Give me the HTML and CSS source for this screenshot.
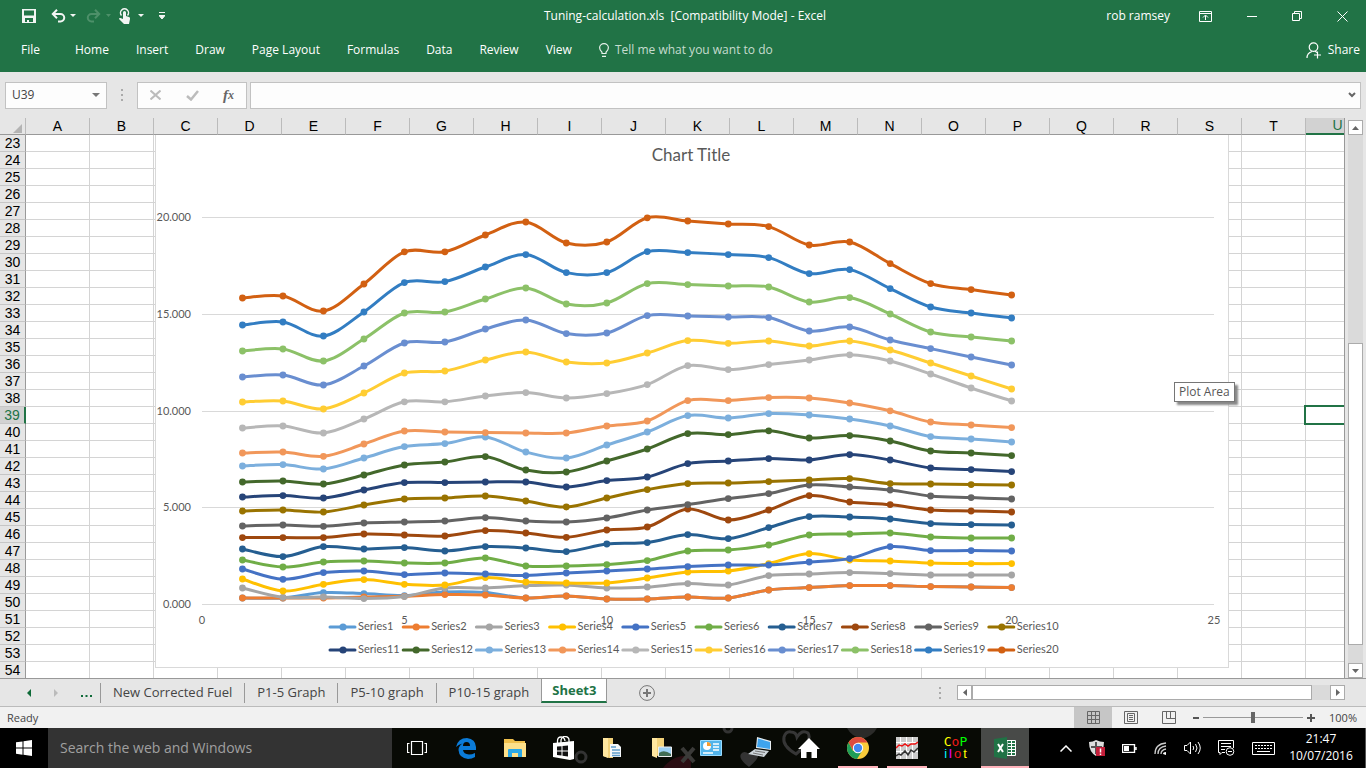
FILE: index.html
```html
<!DOCTYPE html>
<html lang="en">
<head>
<meta charset="utf-8">
<title>Tuning-calculation.xls - Excel</title>
<link rel="stylesheet" href="styles.css">
</head>
<body>
<header class="ribbon">
  <div class="titlebar">
    <div class="quick">
      <button class="ib" aria-label="Save"><svg width="14" height="14"><path d="M0 0h14v14H0zM2 1.500v5h10v-5zM3 9v4h2v-2h2v2h4V9z" fill="#f2f5f3" fill-rule="evenodd"/></svg></button>
      <button class="ib undo" aria-label="Undo"><svg width="25" height="14"><path d="M2 5h7.500a3.500 3.500 0 0 1 0 7.500H7M6 .8 1.800 5 6 9.200" fill="none" stroke="#f2f5f3" stroke-width="2"/><path d="M19 5h6l-3 3z" fill="#f2f5f3"/></svg></button>
      <button class="ib redo" aria-label="Redo"><svg width="25" height="14"><path d="M13 5H5.500a3.500 3.500 0 0 0 0 7.500H8M9 .8 13.200 5 9 9.200" fill="none" stroke="#4d9069" stroke-width="2"/><path d="M20 5h5l-2.500 3z" fill="#4d9069"/></svg></button>
      <button class="ib" aria-label="Touch mode"><svg width="25" height="16"><path d="M2.500 7.500a4 4 0 1 1 6 0" fill="none" stroke="#f2f5f3" stroke-width="1.500"/><path d="M4 4.500a1.500 1.500 0 0 1 3 0V8l3 1q1.500.5 1 2l-1 5H5L0 11q0-1.500 1.500-1L4 11z" fill="#f2f5f3"/><path d="M19 6h6l-3 3z" fill="#f2f5f3"/></svg></button>
      <button class="ib custom" aria-label="Customize toolbar"><svg width="6" height="8"><path d="M0 .5h6M0 3.500h6L3 7z" fill="#f2f5f3" stroke="#f2f5f3"/></svg></button>
    </div>
    <h1 class="doc">Tuning-calculation.xls&nbsp; [Compatibility Mode] - Excel</h1>
    <div class="window">
      <span class="user">rob ramsey</span>
      <button class="ib" aria-label="Ribbon options"><svg width="13" height="11"><path d="M.5.5h12v10H.5zM.5 2.500h12M6.500 9V4.500M4 6.500l2.500-2.500L9 6.500" fill="none" stroke="#fff"/></svg></button>
      <button class="ib" aria-label="Minimize"><svg width="10" height="11"><path d="M0 5.500h10" stroke="#fff"/></svg></button>
      <button class="ib" aria-label="Restore"><svg width="10" height="10"><path d="M.5 2.500h7v7h-7zM2.500 2.500v-2h7v7h-2" fill="none" stroke="#fff"/></svg></button>
      <button class="ib" aria-label="Close"><svg width="11" height="11"><path d="m.5.5 10 10m0-10-10 10" stroke="#fff"/></svg></button>
    </div>
  </div>
  <nav class="menu">
    <button class="file">File</button><button>Home</button><button>Insert</button><button>Draw</button><button>Page Layout</button><button>Formulas</button><button>Data</button><button>Review</button><button>View</button>
    <button class="tell"><svg width="10" height="14"><path d="M3 10.500V9.200Q.6 7 .6 4.800a4.400 4.200 0 0 1 8.800 0Q9.400 7 7 9.200v1.300zM3 13.300h4" fill="none" stroke="#e8f2ec" stroke-width="1.200"/></svg>Tell me what you want to do</button>
    <button class="share"><svg width="16" height="17"><path d="M1 16q0-5 5-6.500M7.500.8a4.200 4.200 0 1 1 0 8.600 4.200 4.200 0 0 1 0-8.600M9 9.300l2 1.200M8 13h7M11.500 9.500v7" fill="none" stroke="#fff" stroke-width="1.200"/></svg>Share</button>
  </nav>
</header>

<div class="formula">
  <div class="namebox"><input aria-label="Name box" value="U39"><button class="ib" aria-label="Names"><svg width="8" height="4"><path d="M0 0h8L4 4z" fill="#777"/></svg></button></div>
  <svg class="grip" width="2" height="12"><path d="M0 0h2v2H0zM0 5h2v2H0zM0 10h2v2H0z" fill="#aaa"/></svg>
  <div class="fxgroup">
    <button class="ib" aria-label="Cancel"><svg width="11" height="10"><path d="m.5.5 10 9m0-9-10 9" stroke="#bcbcbc" stroke-width="2"/></svg></button>
    <button class="ib" aria-label="Enter"><svg width="13" height="11"><path d="m1 6 4 3.500L12 1" fill="none" stroke="#bcbcbc" stroke-width="2.500"/></svg></button>
    <button class="ib fx" aria-label="Insert function">f<sub>x</sub></button>
  </div>
  <div class="entry"><input aria-label="Formula bar"><button class="ib" aria-label="Expand"><svg width="8" height="6"><path d="m1 1 3 3 3-3" fill="none" stroke="#666" stroke-width="2"/></svg></button></div>
</div>

<main class="work">
  <div class="sheet">
    <table class="grid"><thead><tr id="cols"><th class="corner"><svg width="9" height="9"><path d="M9 0v9H0z" fill="#b4b4b4"/></svg></th></tr></thead><tbody id="rows"></tbody></table>
    <div class="clip">
      <div class="chart"><svg id="chart" viewBox="156 135 1072 532" width="1072" height="532" role="img" aria-label="Chart"></svg></div>
      <div class="tip">Plot Area</div>
    </div>
  </div>
  <div class="vscroll">
    <button class="sb" aria-label="Scroll up"><svg width="7" height="4"><path d="M0 4h7L3.500 0z" fill="#666"/></svg></button>
    <div class="track"><div class="thumb"></div></div>
    <button class="sb" aria-label="Scroll down"><svg width="7" height="4"><path d="M0 0h7L3.500 4z" fill="#666"/></svg></button>
  </div>
</main>

<div class="tabs">
  <div class="arrows">
    <button class="ib" aria-label="Previous sheet"><svg width="4" height="8"><path d="M4 0v8L0 4z" fill="#0e6a38"/></svg></button>
    <button class="ib" aria-label="Next sheet"><svg width="4" height="8"><path d="M0 0v8l4-4z" fill="#bbb"/></svg></button>
    <button class="ib" aria-label="More sheets"><svg width="11" height="10"><path d="M0 7h2v2H0zM4.500 7h2v2h-2zM9 7h2v2H9z" fill="#0e6a38"/></svg></button>
  </div>
  <button class="tab">New Corrected Fuel</button><button class="tab">P1-5 Graph</button><button class="tab">P5-10 graph</button><button class="tab">P10-15 graph</button><button class="tab on">Sheet3</button>
  <button class="ib add" aria-label="New sheet"><svg width="16" height="16"><circle cx="8" cy="8" r="7.400" fill="none" stroke="#777"/><path d="M8 4v8M4 8h8" stroke="#777" stroke-width="2"/></svg></button>
  <svg class="grip" width="2" height="12"><path d="M0 0h2v2H0zM0 5h2v2H0zM0 10h2v2H0z" fill="#aaa"/></svg>
  <div class="hscroll">
    <button class="sb" aria-label="Scroll left"><svg width="4" height="7"><path d="M4 0v7L0 3.500z" fill="#666"/></svg></button>
    <div class="track"><div class="thumb"></div></div>
    <button class="sb" aria-label="Scroll right"><svg width="4" height="7"><path d="M0 0v7l4-3.500z" fill="#666"/></svg></button>
  </div>
</div>

<div class="status">
  <span>Ready</span>
  <div class="views">
    <button class="ib view on" aria-label="Normal"><svg width="13" height="13"><path d="M.5.500h12v12H.5zM.5 4.500h12M.5 8.500h12M4.500.5v12M8.500.5v12" fill="none" stroke="#666"/></svg></button>
    <button class="ib view" aria-label="Page layout"><svg width="14" height="13"><path d="M.5.500h13v12H.5zM3.500 2.500h7v8h-7zM5 4.500h4M5 6.500h4M5 8.500h4" fill="none" stroke="#666"/></svg></button>
    <button class="ib view" aria-label="Page break"><svg width="14" height="13"><path d="M.5.500h13v12H.5zM4.500.5v7h9M8.500.5v7" fill="none" stroke="#666"/></svg></button>
  </div>
  <div class="zoom">
    <button class="ib" aria-label="Zoom out"><svg width="6" height="8"><path d="M0 4h6" stroke="#555" stroke-width="2"/></svg></button>
    <input type="range" aria-label="Zoom" min="0" max="200" value="100">
    <button class="ib" aria-label="Zoom in"><svg width="8" height="8"><path d="M0 4h8M4 0v8" stroke="#555" stroke-width="2"/></svg></button>
  </div>
  <span class="pct">100%</span>
</div>

<footer class="taskbar">
  <button class="ib start" aria-label="Start"><svg width="16" height="16"><path d="M0 2.300 6.500 1.400v6.200H0zM7.500 1.200 16 0v7.600H7.500zM0 8.500h6.500v6.200L0 13.800zM7.500 8.500H16V16l-8.500-1.200z" fill="#fff"/></svg></button>
  <input class="search" aria-label="Search" placeholder="Search the web and Windows">
  <nav class="apps">
    <svg class="wall" width="588" height="40">
      <path d="M271 40q10-14 28-12v12z" fill="#2a0d12"/>
      <path d="m290 20 12 14m0-14-12 14" stroke="#3a3a38" stroke-width="4"/>
      <circle cx="189" cy="29" r="5" fill="none" stroke="#333" stroke-width="3"/><circle cx="336" cy="0" r="4" fill="none" stroke="#333" stroke-width="3"/>
      <path d="M357 39q-11-8-8-13 3-4 8 0 5-6 9-2 3 5-9 15" fill="#333"/>
      <path d="M404 26q-14-8-12-17 2-6 7-5 5 0 6 5 5-8 11-4 5 7-12 21z" fill="none" stroke="#363636" stroke-width="3"/>
      <path d="M455 0h30q-4 8-15 11-11-3-15-11z" fill="#2b2b29"/>
    </svg>
    <button class="ib app" aria-label="Task view"><svg width="20" height="14"><path d="M4.500.500h11v13h-11zM2.500 2.500h-2v9h2M17.500 2.500h2v9h-2" fill="none" stroke="#fff" stroke-width="1.200"/></svg></button>
    <button class="ib app" aria-label="Edge"><svg width="20" height="21"><path d="M0 9Q2 0 11 0q8.500 1 9 9v3H7q.5 4 6 4.500 3 0 6-1.500v4q-3 2-7 2-9-1-9.500-9 0-4 4-6.500Q3 6 0 9m7-1h7q0-4-3.500-4T7 8" fill="#0b7bd8" fill-rule="evenodd"/></svg></button>
    <button class="ib app" aria-label="File Explorer"><svg width="22" height="19"><path d="M0 0h9l2 2h10v16H0z" fill="#f0c04c"/><path d="M0 4h22v14H0z" fill="#fde08a"/><path d="M4 18v-7q0-1 1-1h12q1 0 1 1v7h-4v-4H8v4z" fill="#2ba8e6"/></svg></button>
    <button class="ib app" aria-label="Store"><svg width="21" height="24"><path d="M0 7 21 5v18l-4 1-17-3z" fill="#fff"/><path d="M4.500 8V5q0-4 3.500-4t4 4M8 7V4q1-4 4.500-3.500T16 4v3" fill="none" stroke="#fff" stroke-width="1.300"/><path d="m4 10.500 4.500-.3v4.300H4zM9.500 10l5.500-.5v5H9.500zM4 15.500h4.500v4L4 19zM9.500 15.500H15v5l-5.500-.8z" fill="#111"/></svg></button>
    <button class="ib app" aria-label="Documents"><svg width="19" height="20"><path d="M0 0h10v20H6l-6-2z" fill="#f2d27a"/><path d="M0 0h5v20L0 18z" fill="#ffe7a0"/><path d="M7 6h8l3 3v10H7z" fill="#f5f8fb"/><path d="M8 9h5M9 12h8M9 15h8M9 17.500h8" stroke="#5f9dcc" stroke-width="1.300"/></svg></button>
    <button class="ib app" aria-label="Pictures"><svg width="20" height="20"><path d="M0 0h12v18H6l-6-1z" fill="#f2d27a"/><path d="M0 0h5v20l-5-2z" fill="#ffe7a0"/><path d="M6.500 9h13v9.500h-13z" fill="#9ed2f5" stroke="#eee"/><path d="M7 18v-3q5-4 12 1v2z" fill="#416d54"/></svg></button>
    <button class="ib app" aria-label="Control panel"><svg width="22" height="16"><path d="M.5.500h21v15H.5z" fill="#52b4ea" stroke="#9bdcff"/><circle cx="7" cy="6" r="4" fill="#fff"/><path d="M7 6V2a4 4 0 0 1 4 4z" fill="#f59b2d"/><path d="M13 4h6M13 7h6M13 10h6M3 13h10" stroke="#fff" stroke-width="1.600"/></svg></button>
    <button class="ib app" aria-label="Computer"><svg width="24" height="22"><path d="m9 0 14 4v9L8 11z" fill="#e8eef2"/><path d="m10 1.500 12 3.500v7L9 10z" fill="#3fa4ee"/><path d="m7 12 14 2-5 6-16-3z" fill="#cdd5da"/><path d="m7 14 10 1.500M5 16l10 2" stroke="#777"/></svg></button>
    <button class="ib app" aria-label="Home"><svg width="22" height="20"><path d="M11 0 22 11h-3v9h-5.500v-6h-5v6H3v-9H0z" fill="#fff"/></svg></button>
    <button class="ib app run" aria-label="Chrome"><svg width="22" height="22"><circle cx="11" cy="11" r="11" fill="#f9cb3b"/><path d="M1.500 5.500A11 11 0 0 1 20.500 5.500H11L6 13.500z" fill="#dd4b3e"/><path d="M1.500 5.500A11 11 0 0 0 10 22l5-8H6z" fill="#1f9d58"/><circle cx="11" cy="11" r="5.200" fill="#fff"/><circle cx="11" cy="11" r="4.200" fill="#4387f0"/></svg></button>
    <button class="ib app run" aria-label="Charts"><svg width="22" height="22"><path d="M0 0h22v22H0z" fill="#ccc"/><path d="M4.500 0v22M10.500 0v22M16.500 0v22M0 5.500h22M0 14.500h22" stroke="#fff"/><path d="m0 11 3-3 3 1 3-2 3 2 3-2 4 0 3-2" fill="none" stroke="#e11" stroke-width="1.500"/><path d="m0 19 3-2 2 1 4-4 3 4 3-5 3 2 4-4" fill="none" stroke="#333" stroke-width="1.500"/></svg></button>
    <button class="ib app copilot" aria-label="CoPilot"><span><b class="y">C</b><b class="r">o</b><b class="g">P</b></span><span class="pilot"><b class="c">i</b><b class="m">l</b><b class="r">o</b><b class="y">t</b></span></button>
  </nav>
  <button class="ib app excel" aria-label="Excel"><svg width="22" height="22"><path d="M13 3.500h8.500v15H13z" fill="#207245" stroke="#fff"/><path d="M14 6.500h7M14 9.500h7M14 12.500h7M14 15.500h7M17.500 4v14" stroke="#fff"/><path d="m0 2 13-2v22L0 20z" fill="#207245"/><path d="m4 7 5 8m0-8-5 8" stroke="#fff" stroke-width="2"/></svg></button>
  <div class="tray">
    <button class="ib" aria-label="Show hidden icons"><svg width="12" height="7"><path d="m.5 6.500 5.500-5.500 5.500 5.500" fill="none" stroke="#fff" stroke-width="1.500"/></svg></button>
    <button class="ib" aria-label="Security"><svg width="16" height="16"><path d="M0 2q4 0 7-2 4 2 8 2 0 10-8 14Q0 12 0 2z" fill="#ddd"/><path d="M7 2v12M2 7h11" stroke="#555" stroke-width="2"/><path d="M7 7h9v9H7z" fill="#c41e3a"/><path d="M11.500 8.500v4M11.500 13.500V15" stroke="#fff" stroke-width="1.500"/></svg></button>
    <button class="ib" aria-label="Battery"><svg width="15" height="9"><path d="M.5.500h12v8H.5zM14 3v3" fill="none" stroke="#fff" stroke-width="1.400"/><path d="M2 2h5v5H2z" fill="#fff"/></svg></button>
    <button class="ib" aria-label="Network"><svg width="13" height="13"><path d="M1 12Q1 2 12 1M4 12Q4 5 12 4M7 12q0-4 5-5" fill="none" stroke="#ccc" stroke-width="1.300"/><path d="M9 12q0-2 3-2v3z" fill="#fff"/></svg></button>
    <button class="ib" aria-label="Volume"><svg width="17" height="14"><path d="M.5 4.500H3l3.500-3.500v12L3 9.500H.5zM9 5q1.500 2 0 4M11.500 3q3 4 0 8M14 1q4.500 6 0 12" fill="none" stroke="#fff"/></svg></button>
    <button class="ib" aria-label="Notifications"><svg width="17" height="16"><path d="M7 12.500H4l-2 2v-2H.5V.5h15V8M3 3.500h10M3 6.500h10M3 9.500h4" fill="none" stroke="#fff"/><circle cx="12" cy="11.500" r="3.800" fill="#000" stroke="#fff"/><path d="M10 11.500h4" stroke="#fff"/></svg></button>
    <button class="ib" aria-label="Keyboard"><svg width="23" height="13"><path d="M.5.500h22v12H.5z" fill="none" stroke="#fff"/><path d="M3 3.500h18M3 6.500h18" stroke="#fff" stroke-dasharray="2 1"/><path d="M5 9.500h13" stroke="#fff"/></svg></button>
  </div>
  <div class="clock"><span>21:47</span><span>10/07/2016</span></div>
</footer>
<script src="app.js"></script>
</body>
</html>
```
FILE: styles.css
```css
* { box-sizing: border-box; }
body { margin: 0; height: 100vh; display: flex; flex-direction: column; overflow: hidden; background: #e6e6e6; font-family: "Open Sans", "Noto Sans", sans-serif; font-size: 12px; line-height: 16px; color: #444; }
button, input { font: inherit; color: inherit; background: none; border: 0; padding: 0; margin: 0; border-radius: 0; outline: 0; }
svg { display: block; flex: none; }
.ib { display: flex; align-items: center; justify-content: center; flex: none; }

.ribbon { background: #217346; color: #fff; height: 72px; flex: none; }
.titlebar { display: grid; grid-template-columns: 1fr auto 1fr; align-items: center; height: 32px; padding: 0 18px 0 22px; }
.quick { display: flex; align-items: center; }
.undo { margin-left: 15px; }
.redo { margin: 0 8px 0 10px; }
.custom { margin-left: 15px; }
.doc { margin: 0; font-size: 12px; font-weight: 400; }
.window { display: flex; align-items: center; justify-content: flex-end; gap: 35px; }
.user { margin-right: -6px; }
.menu { display: flex; align-items: center; gap: 27px; height: 36px; padding: 0 6px 0 21px; }
.file { margin-right: 8px; }
.tell, .share { display: flex; align-items: center; gap: 6px; }
.tell { color: #c6dccf; }
.share { margin-left: auto; }

.formula { display: flex; align-items: center; height: 46px; flex: none; padding: 0 5px; }
.namebox, .fxgroup, .entry { display: flex; align-items: center; height: 27px; border: 1px solid #c2c2c2; background: #fdfdfd; }
.namebox { width: 102px; padding: 0 6px; }
.namebox input, .entry input { flex: 1; min-width: 0; }
.grip { margin: 0 14px; }
.fxgroup { width: 110px; justify-content: space-between; padding: 0 12px; }
.fx { font: italic bold 15px "Liberation Serif", serif; color: #666; }
.fx sub { font-size: 12px; }
.entry { flex: 1; margin-left: 3px; padding: 0 4px; }

.work { flex: 1; display: flex; min-height: 0; }
.sheet { flex: 1; position: relative; overflow: hidden; background: #fff; border-right: 1px solid #999; }
.grid { border-collapse: separate; border-spacing: 0; table-layout: fixed; width: 1370px; font: 14px/15px "Liberation Sans", Arial, sans-serif; color: #000; }
.grid th, .grid td { height: 17px; padding: 0; border-right: 1px solid #d4d4d4; border-bottom: 1px solid #d4d4d4; }
.grid th { font-weight: 400; background: #e6e6e6; }
.grid thead th { border-color: #999; border-right-color: #bbb; width: 64px; }
.grid thead .corner { width: 26px; }
.corner svg { margin: 4px 3px 0 auto; }
.grid tbody th { border-right-color: #999; border-bottom-color: #c6c6c6; }
.grid th.sel { background: #d2d2d2; color: #217346; }
.grid thead th.sel { border-bottom: 2px solid #217346; }
.grid tbody th.sel { border-right: 2px solid #217346; }
.grid td.sel { position: relative; }
.grid td.sel::after { content: ""; position: absolute; inset: -2px -1px -2px -2px; border: 2px solid #217346; }
.clip { position: absolute; inset: 17px 0 0 0; }
.chart { position: absolute; left: 155px; top: 0; background: #fff; border: 1px solid #d9d9d9; border-top: 0; font-family: Lato, Carlito, sans-serif; }
.chart text { font-size: 11px; fill: #595959; }
.chart .title { font-size: 17px; }
.tip { position: absolute; left: 1174px; top: 247px; padding: 1px 4px; border: 1px solid #767676; background: #fff; box-shadow: 3px 3px 2px #888; color: #575757; }
.vscroll { width: 21px; display: flex; flex-direction: column; padding: 2px 3px 0; }
.sb { display: flex; align-items: center; justify-content: center; width: 15px; height: 15px; flex: none; background: #fff; border: 1px solid #ababab; }
.track { flex: 1; display: flex; background: #dadada; }
.vscroll .track { flex-direction: column; }
.vscroll .track::before { content: ""; flex: 209; }
.vscroll .track::after { content: ""; flex: 18; }
.thumb { background: #fff; border: 1px solid #ababab; }
.vscroll .thumb { flex: 302; }

.tabs { display: flex; align-items: center; height: 29px; flex: none; border-top: 1px solid #999; border-bottom: 1px solid #bbb; padding-right: 21px; }
.arrows { display: flex; align-items: center; gap: 23px; padding: 0 8px 0 27px; }
.tab { height: 20px; padding: 0 12px 2px; border-left: 1px solid #999; font-size: 13px; white-space: nowrap; }
.tab.on { align-self: flex-start; height: 24px; padding: 0 10px; background: #fff; color: #217346; font-weight: 700; border-right: 1px solid #999; border-bottom: 2px solid #217346; }
.add { margin-left: 32px; }
.tabs .grip { margin-left: auto; margin-right: 16px; }
.hscroll { display: flex; width: 388px; }
.hscroll .thumb { flex: 340; }
.hscroll .track::after { content: ""; flex: 18; }

.status { display: flex; align-items: center; height: 21px; flex: none; padding: 0 9px 0 7px; background: #f1f1f1; font-size: 11px; }
.views { display: flex; align-self: stretch; margin-left: auto; }
.view { width: 38px; }
.view.on { background: #c6c6c6; }
.zoom { display: flex; align-items: center; gap: 4px; margin: 0 14px 0 5px; }
.zoom input { -webkit-appearance: none; appearance: none; width: 100px; height: 11px; background: linear-gradient(#999, #999) center / 100% 1px no-repeat; }
.zoom input::-webkit-slider-thumb { -webkit-appearance: none; width: 4px; height: 11px; background: #666; }

.taskbar { display: flex; height: 40px; flex: none; background: #000; color: #fff; }
.start { width: 48px; }
.search { width: 344px; flex: none; padding: 0 12px; background: #333; font-size: 14px; }
.search::placeholder { color: #a0a0a0; opacity: 1; }
.apps { position: relative; display: flex; width: 589px; background: #080a05; }
.wall { position: absolute; left: 0; top: 0; }
.app { position: relative; width: 49px; }
.run::after { content: ""; position: absolute; left: 5px; right: 4px; bottom: 0; height: 2px; background: #ffb3bb; }
.excel { width: 48px; background: #484a48; border-bottom: 2px solid #ffb3bb; padding-top: 2px; }
.copilot { flex-direction: column; font: 13px/12px "DejaVu Sans Mono", monospace; }
.copilot span { display: flex; }
.copilot b { font-weight: 400; }
.copilot .pilot { font-family: "Liberation Sans", sans-serif; gap: 2px; }
.y { color: #ff0; } .r { color: #f01818; } .g { color: #0f0; } .c { color: #0ff; } .m { color: #f0f; }
.tray { display: flex; align-items: center; gap: 17px; margin-left: auto; }
.clock { display: flex; flex-direction: column; justify-content: center; align-items: center; width: 88px; margin-left: 3px; padding: 0 1px 3px 0; line-height: 17px; border-right: 1px solid #555; }
```
FILE: app.js
```js
const cols = 'ABCDEFGHIJKLMNOPQRSTU'.split('');
document.getElementById('cols').insertAdjacentHTML('beforeend',
  cols.map(c => `<th${c === 'U' ? ' class="sel"' : ''}>${c}</th>`).join(''));
let body = '';
for (let r = 23; r <= 54; r++) {
  const on = r === 39;
  body += `<tr><th${on ? ' class="sel"' : ''}>${r}</th>` +
    cols.map(c => on && c === 'U' ? '<td class="sel"></td>' : '<td></td>').join('') + '</tr>';
}
document.getElementById('rows').innerHTML = body;

// Vertical position of each point, one row per series
const series = [
  ['#5b9bd5', [597.7,597.7,592.3,593.3,595.3,591.7,592.3,597.7,595.7,598.7,598.7,596.7,597.7,589.7,587.3,585.3,585.3,586.3,586.7,587.3]],
  ['#ed7d31', [597.7,597.7,597.7,596.7,596,594.3,594.7,597.7,595.7,598.7,598.7,596.7,597.7,589.7,587.3,585.3,585.3,586.3,586.7,587.3]],
  ['#a5a5a5', [587.7,597,596.7,598.3,596.3,587.7,587.7,585.3,584.7,587.7,586.7,583.3,584.7,575.3,573.7,572.3,573.3,574.7,574.7,574.7]],
  ['#ffc000', [578.7,590.7,584,579.3,584,584.7,577.3,581.7,582.7,582.7,577.7,571.7,570.7,563.3,553.3,559.7,560.7,562.7,563.3,563.3]],
  ['#4472c4', [568.7,579,572.3,570.7,574.3,572.7,573.7,575.3,572.7,570.7,568.7,566.3,564.7,564.7,561.7,558.3,546.3,550.3,550.3,550.7]],
  ['#70ad47', [559.7,566.7,561.7,560.7,562.7,562.7,557.7,565.7,565.7,564.3,560.3,550.7,549.7,544.7,534.7,533.7,532.7,536.7,537.7,537.7]],
  ['#255e91', [548.7,556.3,546.3,548.7,547.3,550.7,546.3,547.7,551.3,543.7,542.3,534.3,538.3,527.3,516.3,516.7,518.7,523.3,524.3,524.7]],
  ['#9e480e', [537.3,537.3,537.3,533.7,534.7,535.7,530.3,532.7,537,529.7,526.7,508.7,519.7,509.7,495.3,501.7,504.3,509.7,510.7,511.7]],
  ['#636363', [525.7,524.7,526,522.7,521.7,520.7,517.3,520.7,521.7,517.7,509.7,504.3,498.3,493.3,484.7,486.7,489.7,495.7,497.3,498.7]],
  ['#997300', [510.7,509.7,511.7,504.7,498.7,497.7,495.7,500.7,506.7,497.7,489.3,483.3,482.7,481.3,479.7,478.3,483.3,483.7,484.3,484.7]],
  ['#264478', [496.7,495.3,497.7,489.7,482.3,482.3,481.7,481.7,486.7,480.3,476.7,463.3,460.7,458.3,459.7,454.3,459.7,467.7,469.3,471.3]],
  ['#43682b', [481.7,480.7,483.7,474.7,464.7,461.7,456.3,469.7,471.7,460.7,448.7,433.3,434.3,430.5,437.7,435.3,440.7,450.7,452.7,455.3]],
  ['#7cafdd', [465.7,464.3,468.7,457.7,446.3,443.3,436.7,451.7,457.7,444.7,431.7,415.3,417.7,413.3,414.7,418.7,425.7,436.3,438.7,441.7]],
  ['#f1975a', [452.7,451.7,456,443.7,430.7,431.7,432.3,432.7,432.7,425.7,420.7,400.3,400.3,397.3,397.7,402.7,410.5,421.7,424.7,427.3]],
  ['#b7b7b7', [427.7,425.7,432.7,418.7,401.5,401.5,395.7,392.3,397.7,393.3,384.3,365.3,369.3,364.3,359.7,354.5,360.7,373.7,387.7,400.7]],
  ['#ffcd33', [401.7,400.7,408.7,392.7,372.7,370.7,359.7,351.7,361.7,362.7,352.7,340.3,343,340.7,345.7,340.7,349.7,362.7,375.7,388.7]],
  ['#698ed0', [376.7,374.7,384.7,365.7,342.7,341.7,328.7,319.7,333.3,332.7,315.3,315.7,316.7,317.3,330.7,326.7,339.7,348.3,356.7,364.7]],
  ['#8cc168', [350.7,348.7,360.7,338.7,312.7,311.7,298.7,287.7,303.7,302.7,283.3,284.3,285.7,286.7,301.7,297.3,313.7,331.7,336.7,340.7]],
  ['#327dc2', [324.7,321.7,335.7,311.7,282.3,281.3,266.7,254.3,272.3,272.3,251.3,252.3,254.3,257.3,273.3,269.3,288.3,306.7,312.7,317.7]],
  ['#d26012', [297.7,295.7,310.7,283.7,251.5,251.5,234.7,221.7,242.7,241.7,217.5,220.7,223.7,226.3,244.7,241.7,263.3,283.3,289.3,294.7]]
];
const left = 202, step = 40.48, base = 604.5, unit = 96.75;
let out = '<text class="title" x="691" y="161" text-anchor="middle">Chart Title</text>';
for (let i = 0; i <= 4; i++) {
  const y = Math.floor(base - i * unit) + 0.5;
  out += `<path d="M${left} ${y}H1214" stroke="#d9d9d9"/><text x="191" y="${y + 3}" text-anchor="end">${i * 5}.000</text>`;
}
for (let i = 0; i <= 5; i++) {
  out += `<text x="${left + i * 5 * step}" y="624" text-anchor="middle">${i * 5}</text>`;
}
for (const [color, ys] of series) {
  const p = ys.map((y, i) => [left + (i + 1) * step, y + 0.3]);
  let d = `M${p[0]}`;
  for (let i = 0; i < p.length - 1; i++) {
    const a = p[i - 1] || p[i], b = p[i], c = p[i + 1], e = p[i + 2] || c;
    d += `C${b[0] + (c[0] - a[0]) / 6} ${b[1] + (c[1] - a[1]) / 6} ${c[0] - (e[0] - b[0]) / 6} ${c[1] - (e[1] - b[1]) / 6} ${c}`;
  }
  out += `<path d="${d}" fill="none" stroke="${color}" stroke-width="3" stroke-linecap="round"/>` +
    p.map(q => `<circle cx="${q[0]}" cy="${q[1]}" r="3.4" fill="${color}"/>`).join('');
}
series.forEach(([color], i) => {
  const x = 330 + (i % 10) * 73.2, y = i < 10 ? 627 : 650;
  out += `<path d="M${x} ${y}h25" stroke="${color}" stroke-width="3" stroke-linecap="round"/>` +
    `<circle cx="${x + 13}" cy="${y}" r="3.6" fill="${color}"/><text x="${x + 28}" y="${y + 3}">Series${i + 1}</text>`;
});
document.getElementById('chart').innerHTML = out;
```
